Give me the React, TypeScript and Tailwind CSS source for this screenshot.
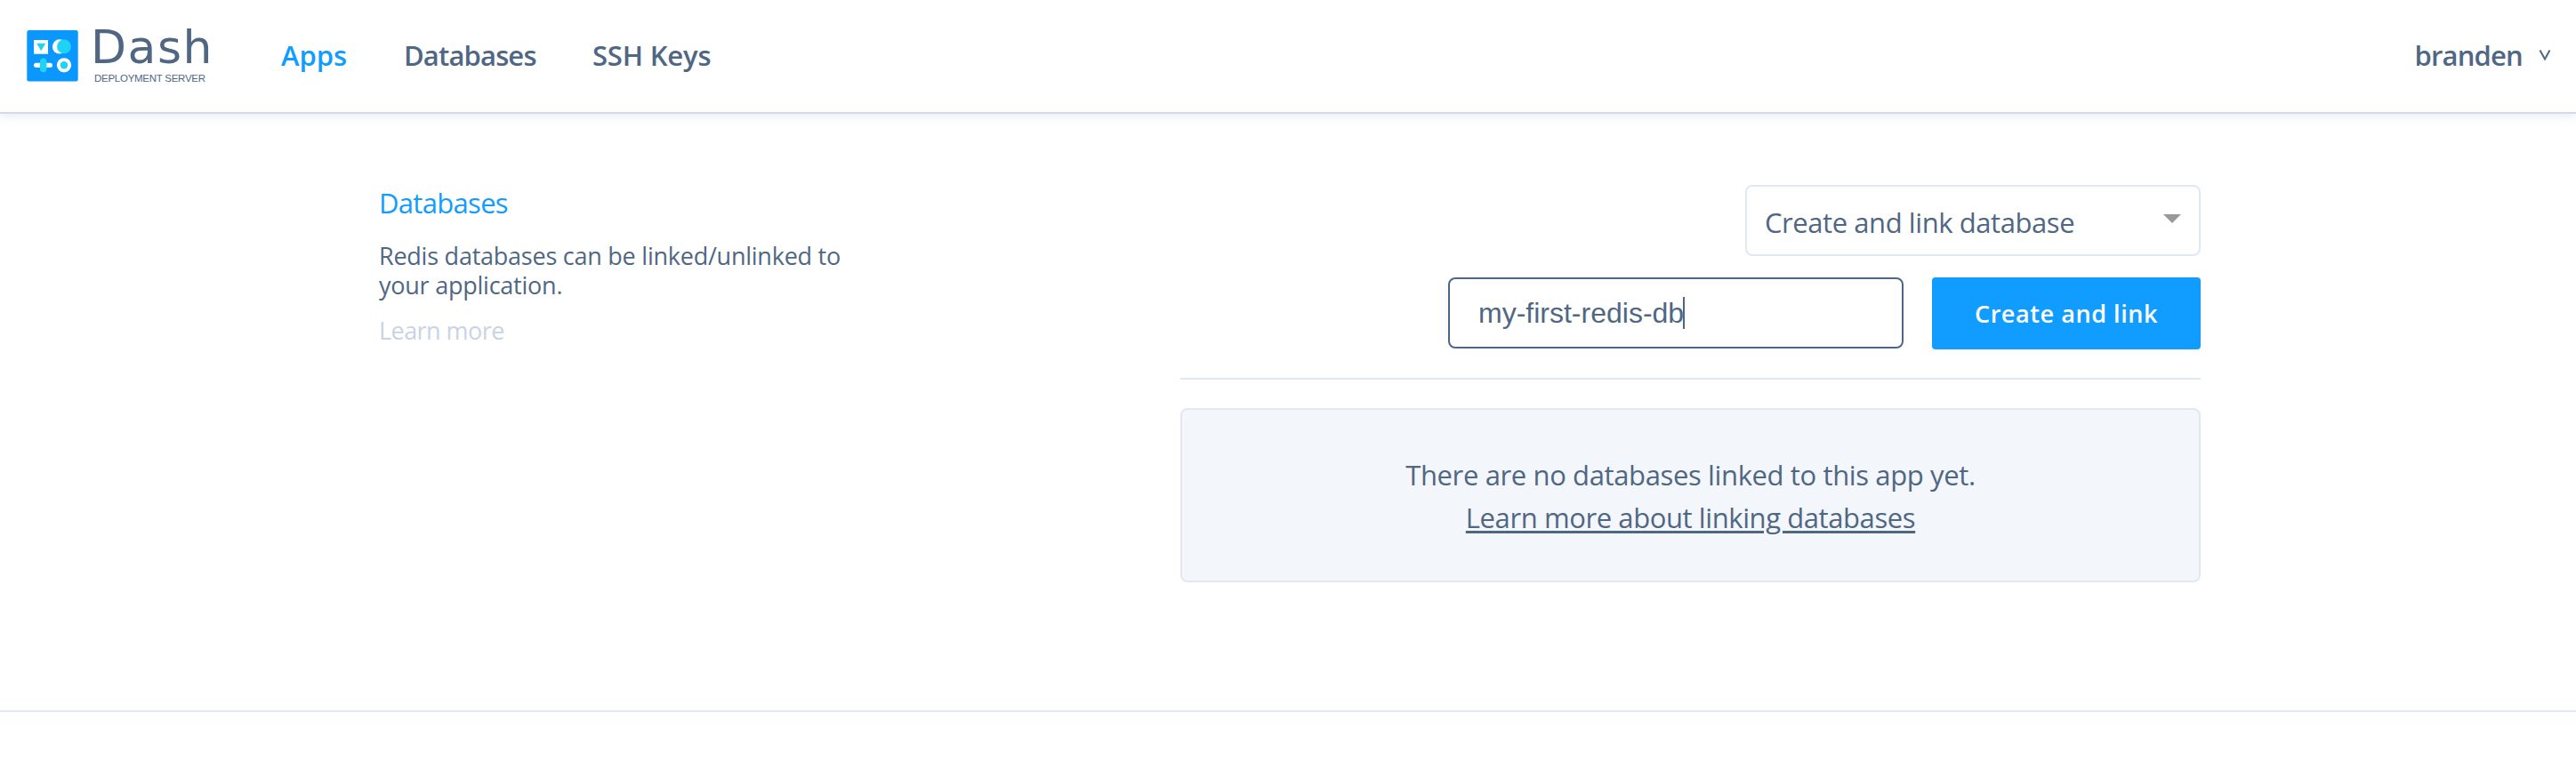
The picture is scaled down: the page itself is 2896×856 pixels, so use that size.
import React from "react";

function LogoMark() {
  return (
    <svg width="58" height="58" viewBox="0 0 58 58" className="block">
      <rect x="0.3" y="0" width="57.4" height="57.5" rx="2.2" fill="#0A98FF" />
      <rect x="8" y="11" width="16" height="15.7" fill="#fff" />
      <path d="M11.2 14.7H21.2L16.2 23.3Z" fill="#1FD3F3" />
      <circle cx="37" cy="18.4" r="8.1" fill="#fff" />
      <circle cx="42" cy="18.4" r="7.9" fill="#1FD3F3" />
      <rect x="8" y="36.7" width="21" height="5.2" rx="2.6" fill="#fff" />
      <rect x="15" y="31.4" width="7.4" height="15.8" rx="3.4" fill="#1FD3F3" />
      <circle cx="42" cy="39.3" r="8.1" fill="#fff" />
      <circle cx="42" cy="39.3" r="4.2" fill="#1FD3F3" />
    </svg>
  );
}

function Header() {
  return (
    <header className="box-border flex h-[127.5px] shrink-0 items-start border-b-[2.5px] border-[#D0DCE8] bg-white pl-[30px] pr-7 shadow-[0_3px_10px_rgba(200,212,227,0.45)]">
      <div className="flex w-[286px] shrink-0">
        <div className="pt-[34px]">
          <LogoMark />
        </div>
        <div className="pl-[14px] pt-[26px] text-[#506784]">
          <div className="h-[56px] whitespace-nowrap pt-px font-['DejaVu_Sans',sans-serif] text-[52px] leading-[52px] tracking-[1.5px]">
            Dash
          </div>
          <div className="whitespace-nowrap pl-1 font-['Liberation_Sans',sans-serif] text-[11.5px] leading-[13px] tracking-[-0.27px]">
            DEPLOYMENT SERVER
          </div>
        </div>
      </div>
      <nav className="flex h-[124px] grow items-center whitespace-nowrap text-[31px] font-semibold text-[#506784]">
        <a className="w-[138px] text-[#119DFF]">Apps</a>
        <a className="w-[212px] tracking-[-0.85px]">Databases</a>
        <a className="tracking-[-0.17px]">SSH Keys</a>
      </nav>
      <div className="flex h-[124px] items-center text-[31px] font-semibold text-[#506784]">
        <span className="tracking-[-0.8px]">branden</span>
        <svg width="14" height="12" viewBox="0 0 14 12" className="ml-[18px]">
          <path d="M1.5 0.5L7 10.5L12.5 0.5" fill="none" stroke="#506784" strokeWidth="2" />
        </svg>
      </div>
    </header>
  );
}

function Description() {
  return (
    <div className="w-[560px] text-[27px] leading-[33px] text-[#506784]">
      <h2 className="mt-[-2px] text-[31px] leading-[44px] tracking-[-0.69px] text-[#119DFF]">Databases</h2>
      <p className="mt-[21px] tracking-[-0.24px]">
        Redis databases can be linked/unlinked to
        <br />
        your application.
      </p>
      <a className="mt-[18px] block tracking-[-0.55px] text-[#C8D4E3]">Learn more</a>
    </div>
  );
}

function LinkForm() {
  return (
    <div className="w-[1147px]">
      <div className="flex justify-end">
        <div className="flex h-20 w-[512px] items-center justify-between rounded-lg border-2 border-[#DFE8F3] pl-5 pr-5">
          <span className="pt-1 text-[31px] leading-[44px] tracking-[-0.43px] text-[#506784]">Create and link database</span>
          <svg width="20" height="10" viewBox="0 0 20 10" className="-mt-1">
            <path d="M0 0H20L10 10Z" fill="#999" />
          </svg>
        </div>
      </div>
      <div className="mt-6 flex justify-end gap-8">
        <div className="flex h-20 w-[512px] items-center rounded-lg border-2 border-[#506784] pl-8">
          <span className="font-['Liberation_Sans',sans-serif] text-[32px] leading-10 text-[#506784]">my-first-redis-db</span>
          <span className="-ml-px h-9 w-0.5 bg-[#506784]" />
        </div>
        <button className="flex h-[81px] w-[302px] items-center justify-center rounded-[4px] bg-[#119DFF] pt-px text-[27px] font-semibold tracking-[0.57px] text-white">
          Create and link
        </button>
      </div>
      <div className="mt-8 h-0.5 bg-[#DFE8F3]" />
      <div className="mt-8 flex h-[196px] flex-col items-center rounded-lg border-2 border-[#DFE8F3] bg-[#F3F6FA] pt-[49px] text-[31px] leading-[48px] text-[#506784]">
        <p className="tracking-[-0.37px]">There are no databases linked to this app yet.</p>
        <a className="tracking-[-0.41px] underline decoration-[3px] underline-offset-[3px]">Learn more about linking databases</a>
      </div>
    </div>
  );
}

export default function App() {
  return (
    <div className="flex h-[856px] w-[2896px] flex-col overflow-hidden bg-white font-['Open_Sans','Noto_Sans',sans-serif]">
      <Header />
      <main className="box-border flex h-[673.5px] shrink-0 justify-between border-b-2 border-[#DFE8F3] pl-[426px] pr-[422px] pt-[80.5px]">
        <Description />
        <LinkForm />
      </main>
    </div>
  );
}
